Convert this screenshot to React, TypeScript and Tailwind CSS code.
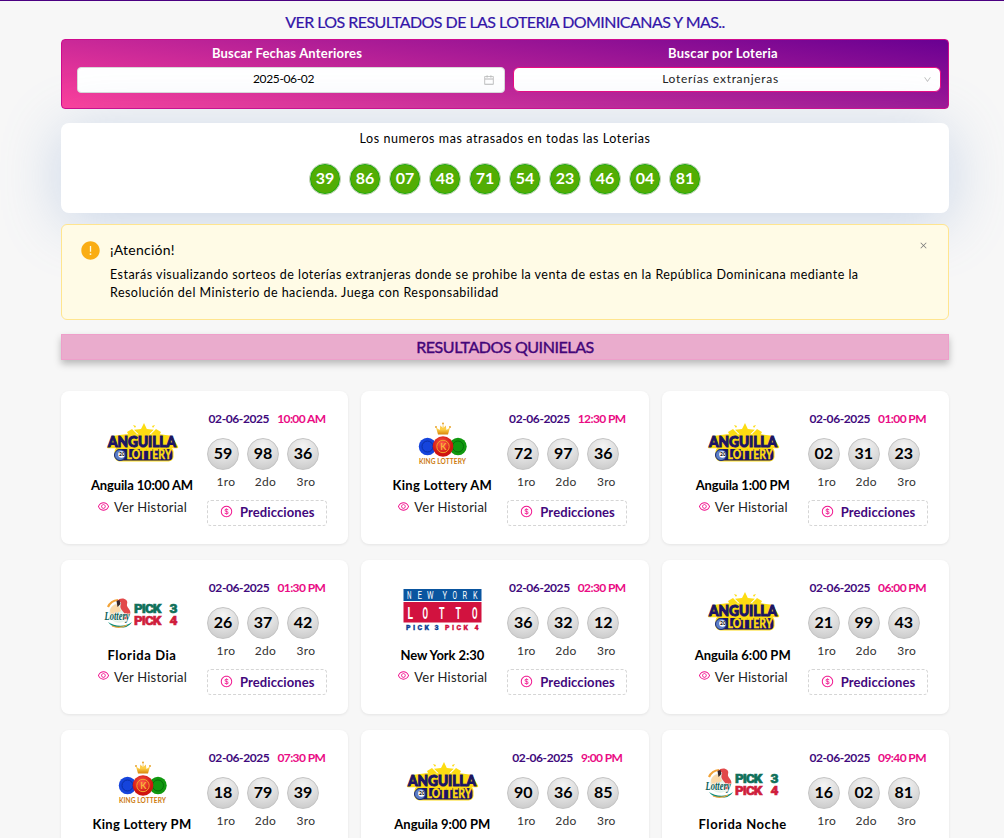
import {
  AiFillExclamationCircle,
  AiOutlineCalendar,
  AiOutlineClose,
  AiOutlineDollar,
  AiOutlineDown,
  AiOutlineEye,
} from "react-icons/ai";

type LogoKind = "anguilla" | "king" | "pick" | "newyork";

interface Draw {
  name: string;
  time: string;
  logo: LogoKind;
  numbers: string[];
  nameTracking: string;
}

const overdue = ["39", "86", "07", "48", "71", "54", "23", "46", "04", "81"];

const draws: Draw[] = [
  { name: "Anguila 10:00 AM", time: "10:00 AM", logo: "anguilla", numbers: ["59", "98", "36"], nameTracking: "tracking-[-0.150px]" },
  { name: "King Lottery AM", time: "12:30 PM", logo: "king", numbers: ["72", "97", "36"], nameTracking: "tracking-[0.280px]" },
  { name: "Anguila 1:00 PM", time: "01:00 PM", logo: "anguilla", numbers: ["02", "31", "23"], nameTracking: "tracking-[-0.160px]" },
  { name: "Florida Dia", time: "01:30 PM", logo: "pick", numbers: ["26", "37", "42"], nameTracking: "tracking-[0.550px]" },
  { name: "New York 2:30", time: "02:30 PM", logo: "newyork", numbers: ["36", "32", "12"], nameTracking: "tracking-[-0.080px]" },
  { name: "Anguila 6:00 PM", time: "06:00 PM", logo: "anguilla", numbers: ["21", "99", "43"], nameTracking: "tracking-[-0.020px]" },
  { name: "King Lottery PM", time: "07:30 PM", logo: "king", numbers: ["18", "79", "39"], nameTracking: "tracking-[0.280px]" },
  { name: "Anguila 9:00 PM", time: "9:00 PM", logo: "anguilla", numbers: ["90", "36", "85"], nameTracking: "tracking-[-0.020px]" },
  { name: "Florida Noche", time: "09:40 PM", logo: "pick", numbers: ["16", "02", "81"], nameTracking: "tracking-[0.550px]" },
];

function AnguillaLogo() {
  return (
    <svg viewBox="0 0 80 46" className="h-[46px] w-20 overflow-visible" fontFamily="Lato, sans-serif" fontWeight="900">
      <path d="M42 4l2.800 6 7 .8-5 5 2 7H35l2-7-5-5 7-.8z" fill="#fddc12" />
      <path d="M31 6l3 1-1 2zM53 6l-3 1 1 2zM25 13l5-3 5 5-8 2zM59 13l-5-3-5 5 8 2z" fill="#fddc12" />
      <rect x="12.500" y="28" width="59" height="14.500" rx="5" fill="#fddc12" />
      <path d="M6 28L12 18l12-1.500h34L69 18l6 10z" fill="#fddc12" stroke="#fddc12" strokeWidth="2.400" strokeLinejoin="round" />
      <text x="6" y="27.800" fontSize="14.500" textLength="68" lengthAdjust="spacingAndGlyphs" fill="#1b1464" stroke="#1b1464" strokeWidth="1">ANGUILLA</text>
      <rect x="14" y="30" width="56.500" height="11.500" rx="4" fill="#1b1464" />
      <text x="24.500" y="40.300" fontSize="12.500" textLength="45" lengthAdjust="spacingAndGlyphs" fill="#fddc12" stroke="#fddc12" strokeWidth="0.300">LOTTERY</text>
      <circle cx="18" cy="36" r="5.500" fill="#5b7fc8" stroke="#1b2a78" />
      <circle cx="19.500" cy="35.500" r="3.300" fill="#fff" />
      <text x="17" y="37.300" fontSize="5" fill="#151515">20</text>
    </svg>
  );
}

function KingLogo() {
  return (
    <svg viewBox="0 0 80 46" className="h-[46px] w-20 overflow-visible" fontFamily="Lato, sans-serif" fontWeight="700">
      <defs>
        <radialGradient id="kingRed" cx="45%" cy="35%">
          <stop offset="0" stopColor="#ff5a48" />
          <stop offset="1" stopColor="#cf1410" />
        </radialGradient>
        <linearGradient id="kingGold" x1="0" y1="0" x2="0" y2="1">
          <stop offset="0" stopColor="#eda51a" />
          <stop offset="0.500" stopColor="#ffd24a" />
          <stop offset="1" stopColor="#d88508" />
        </linearGradient>
      </defs>
      <circle cx="25.500" cy="27.500" r="8.700" fill="#1544dc" />
      <circle cx="25.500" cy="27.500" r="5.500" fill="none" stroke="#0a2fa6" strokeWidth="1" />
      <circle cx="56" cy="27.500" r="8.700" fill="#10980f" />
      <circle cx="56" cy="27.500" r="5.500" fill="none" stroke="#06700a" strokeWidth="1" />
      <circle cx="41" cy="27.500" r="10.300" fill="url(#kingRed)" />
      <circle cx="41" cy="27.500" r="6.200" fill="none" stroke="#f0a32b" strokeWidth="1" />
      <text x="38.200" y="31" fontSize="9" fill="#f7b23a">K</text>
      <path d="M36 15.500l-2-7 3.700 2.500.8-4.500 2 2.500.500-4.500.700 4.500 2-2.500.800 4.500 3.500-2.500-2 7z" fill="url(#kingGold)" />
      <circle cx="34" cy="8" r="0.900" fill="#e69a15" />
      <circle cx="41" cy="4.500" r="0.900" fill="#e69a15" />
      <circle cx="48" cy="8" r="0.900" fill="#e69a15" />
      <text x="17" y="45" fontSize="6.500" textLength="47" fill="#cc7a0c">KING LOTTERY</text>
    </svg>
  );
}

function PickLogo() {
  return (
    <svg viewBox="0 0 80 46" className="h-[46px] w-20 overflow-visible" fontWeight="900">
      <circle cx="17" cy="25" r="10" fill="#e6f4ec" />
      <path d="M6 19a12 12 0 0 1 10-7" fill="none" stroke="#f2a338" strokeWidth="2.200" />
      <path d="M8 22a9 9 0 0 1 8-6l3 7-10 6z" fill="#fbd9a8" />
      <path d="M15 13c4-5 12-2 10 3-1 4 5 5 3 11-1 3-4 5-7 4 4-5 0-7-2-10-2-4 2-6-1-7z" fill="#e2494a" />
      <path d="M14.500 13l3-1 1 4-3 3z" fill="#34262a" />
      <path d="M6 34c6 4 16 6 24 0-4 6-9 6-13 5-4 1-8-1-11-5z" fill="#0c8f7b" />
      <path d="M10 38c5 2 10 2 15-1" fill="none" stroke="#f2a338" strokeWidth="1.200" />
      <text
        x="2.500"
        y="31.500"
        fontFamily="Liberation Serif, serif"
        fontStyle="italic"
        fontSize="13.500"
        fontWeight="700"
        textLength="25"
        lengthAdjust="spacingAndGlyphs"
        className="[paint-order:stroke]"
        stroke="#fff"
        strokeWidth="1.200"
        fill="#0b5e57"
      >
        Lottery
      </text>
      <g fontFamily="Roboto, sans-serif" fontSize="13.500" strokeWidth="0.600">
        <text x="32" y="24.500" textLength="27.500" fill="#10705a" stroke="#10705a">PICK</text>
        <text x="67.500" y="24.500" textLength="8" lengthAdjust="spacingAndGlyphs" fill="#10705a" stroke="#10705a">3</text>
        <text x="32" y="36.500" textLength="27.500" fill="#cf1e3c" stroke="#cf1e3c">PICK</text>
        <text x="67.500" y="36.500" textLength="8" lengthAdjust="spacingAndGlyphs" fill="#cf1e3c" stroke="#cf1e3c">4</text>
      </g>
    </svg>
  );
}

function NewYorkLogo() {
  const top: [string, number][] = [
    ["N", 5], ["E", 15.5], ["W", 25], ["Y", 40.5], ["O", 50.5], ["R", 60.5], ["K", 71],
  ];
  const middle: [string, number][] = [
    ["L", 5.5], ["O", 20.5], ["T", 37], ["T", 53.5], ["O", 70],
  ];
  return (
    <svg viewBox="0 0 80 46" className="h-[46px] w-20 overflow-visible" fontFamily="Roboto, sans-serif">
      <rect x="1.500" y="1" width="78" height="12" fill="#0a559f" />
      <rect x="1.500" y="14" width="78" height="20.500" fill="#d2123f" />
      {top.map(([letter, x]) => (
        <text key={x} x={x} y="10.800" fontSize="10" fill="#fff" textLength={letter === "W" ? 6.5 : 4.5} lengthAdjust="spacingAndGlyphs">{letter}</text>
      ))}
      {middle.map(([letter, x]) => (
        <text key={x} x={x} y="30.500" fontSize="17" fontWeight="700" fill="#fff" textLength="5.500" lengthAdjust="spacingAndGlyphs">{letter}</text>
      ))}
      <g fontSize="7" fontWeight="900" strokeWidth="0.300">
        <text x="4" y="41.500" textLength="23" fill="#0b3f95" stroke="#0b3f95">PICK</text>
        <text x="32.500" y="41.500" fill="#0b3f95" stroke="#0b3f95">3</text>
        <text x="43" y="41.500" textLength="23" fill="#d2123f" stroke="#d2123f">PICK</text>
        <text x="72.500" y="41.500" fill="#d2123f" stroke="#d2123f">4</text>
      </g>
    </svg>
  );
}

function Logo({ kind }: { kind: LogoKind }) {
  switch (kind) {
    case "anguilla":
      return <AnguillaLogo />;
    case "king":
      return <KingLogo />;
    case "pick":
      return <PickLogo />;
    case "newyork":
      return <NewYorkLogo />;
  }
}

function DrawCard({ draw }: { draw: Draw }) {
  return (
    <article className="flex h-[153.500px] rounded-lg bg-white pl-[15px] shadow-[0_1px_3px_rgba(0,0,0,0.08)]">
      <div className="flex w-[132px] flex-col items-center pt-7">
        <Logo kind={draw.logo} />
        <h3 className={`mt-[10.500px] h-5 text-[13px] leading-5 font-bold whitespace-nowrap text-black ${draw.nameTracking}`}>{draw.name}</h3>
        <a className="mt-0.5 flex h-5 items-center gap-1 text-[13px] leading-5 tracking-[0.200px] whitespace-nowrap text-[#222]">
          <AiOutlineEye className="mb-0.5 size-[13px] text-[#f0108c]" />
          Ver Historial
        </a>
      </div>
      <div className="-ml-px w-[120px] pt-[19px]">
        <p className="flex h-[18px] justify-center gap-2 text-[12px] leading-[18px] font-bold whitespace-nowrap">
          <span className="tracking-[-0.400px] text-[#3f0a7d]">02-06-2025</span>
          <span className="tracking-[-0.600px] text-[#ea0b84]">{draw.time}</span>
        </p>
        <div className="mt-2.5 flex gap-2">
          {draw.numbers.map((n, i) => (
            <span
              key={i}
              className="flex size-8 items-center justify-center rounded-full border border-[#c4c4c4] bg-[radial-gradient(circle_at_50%_25%,#f4f4f4,#dedede_50%,#c4c4c4)] pb-0.5 text-[16px] font-bold text-black"
            >
              {n}
            </span>
          ))}
        </div>
        <div className="mt-0.5 flex h-5 gap-[1px] text-[12px] leading-5 tracking-[0.300px] text-[#333]">
          <span className="w-[38px] text-center">1ro</span>
          <span className="w-[39px] text-center">2do</span>
          <span className="w-[40px] text-center">3ro</span>
        </div>
        <button className="mt-2 flex h-[26px] w-[120px] items-center gap-[7px] rounded border border-dashed border-[#d5d5d5] bg-white pl-3 text-[13px] font-bold tracking-[0.100px] text-[#42077c]">
          <AiOutlineDollar className="mb-0.5 size-[13px] text-[#f0108c]" />
          Predicciones
        </button>
      </div>
    </article>
  );
}

export default function App() {
  return (
    <div className="h-[838px] overflow-hidden border-t border-[#4b0082] bg-[#f7f7f7] font-[Lato,sans-serif] text-black">
      <main className="ml-[61px] flex w-[888px] flex-col">
        <h1 className="mt-[9px] h-6 text-center text-[16px] leading-6 tracking-[-0.550px] whitespace-nowrap text-[#3315a8] [-webkit-text-stroke:0.2px]">
          VER LOS RESULTADOS DE LAS LOTERIA DOMINICANAS Y MAS..
        </h1>
        <section className="mt-[5px] flex h-[70px] gap-2 rounded border border-[#cf0a8d] bg-[linear-gradient(8deg,#ff3f9b,#690092)] pl-[15px] text-center">
          <div className="w-[428px] shrink-0">
            <div className="h-[27px] pt-[3px] pr-2 text-[13px] leading-5 font-bold tracking-[0.200px] text-white">Buscar Fechas Anteriores</div>
            <div className="flex h-[26px] items-center rounded border border-[#d9d9d9] bg-white pr-[9px] pl-2 text-[12px]">
              <span className="flex-1 pr-0.5 pb-0.5 tracking-[-0.350px]">2025-06-02</span>
              <AiOutlineCalendar className="size-3 text-[#b8b8b8]" />
            </div>
          </div>
          <div className="w-[428px] shrink-0">
            <div className="h-[27px] pt-[3px] pr-2 text-[13px] leading-5 font-bold tracking-[0.280px] text-white">Buscar por Loteria</div>
            <div className="flex h-[25px] items-center rounded-md border border-[#e80c82] bg-white pr-2 pl-1 text-[12px] text-[#222]">
              <span className="flex-1 pb-0.5 tracking-[0.700px]">Loterías extranjeras</span>
              <AiOutlineDown className="size-[9px] text-[#b8b8b8]" />
            </div>
          </div>
        </section>
        <section className="mt-3.5 h-[90px] rounded-lg bg-white shadow-[0_8px_60px_rgba(100,140,200,0.320)]">
          <p className="pt-1.5 text-center text-[12.500px] leading-5 tracking-[0.570px]">Los numeros mas atrasados en todas las Loterias</p>
          <div className="mt-3.5 flex justify-center gap-2">
            {overdue.map((n) => (
              <span
                key={n}
                className="flex size-8 items-center justify-center rounded-full border border-[#ccd5c6] bg-[#52ad04] pb-0.5 text-[16px] font-bold text-white shadow-[inset_0_0_0_1px_#16ac10]"
              >
                {n}
              </span>
            ))}
          </div>
        </section>
        <section className="relative mt-[11px] flex h-24 rounded-md border border-[#ffe58f] bg-[#fffbe6] pt-[15px] pl-[18px]">
          <AiFillExclamationCircle className="size-[21px] shrink-0 text-[#faad14]" />
          <div className="ml-[9px]">
            <h2 className="text-[14px] leading-5 tracking-[0.250px]">¡Atención!</h2>
            <p className="mt-1.5 text-[12.500px] leading-[18px] tracking-[0.470px] whitespace-nowrap">
              Estarás visualizando sorteos de loterías extranjeras donde se prohibe la venta de estas en la República Dominicana mediante la
              <br />
              Resolución del Ministerio de hacienda. Juega con Responsabilidad
            </p>
          </div>
          <AiOutlineClose className="absolute top-4 right-5 size-[9px] text-[#777]" />
        </section>
        <h2 className="mt-3.5 h-[26px] border border-[#ee9fca] bg-[#eaaccd] text-center text-[16px] leading-[24px] tracking-[-0.420px] text-[#430579] shadow-[0_4px_7px_rgba(0,0,0,0.250)] [-webkit-text-stroke:0.4px]">
          RESULTADOS QUINIELAS
        </h2>
        <div className="mt-[30.750px] grid grid-cols-3 gap-x-[13px] gap-y-4">
          {draws.map((d) => (
            <DrawCard key={d.name} draw={d} />
          ))}
        </div>
      </main>
    </div>
  );
}
